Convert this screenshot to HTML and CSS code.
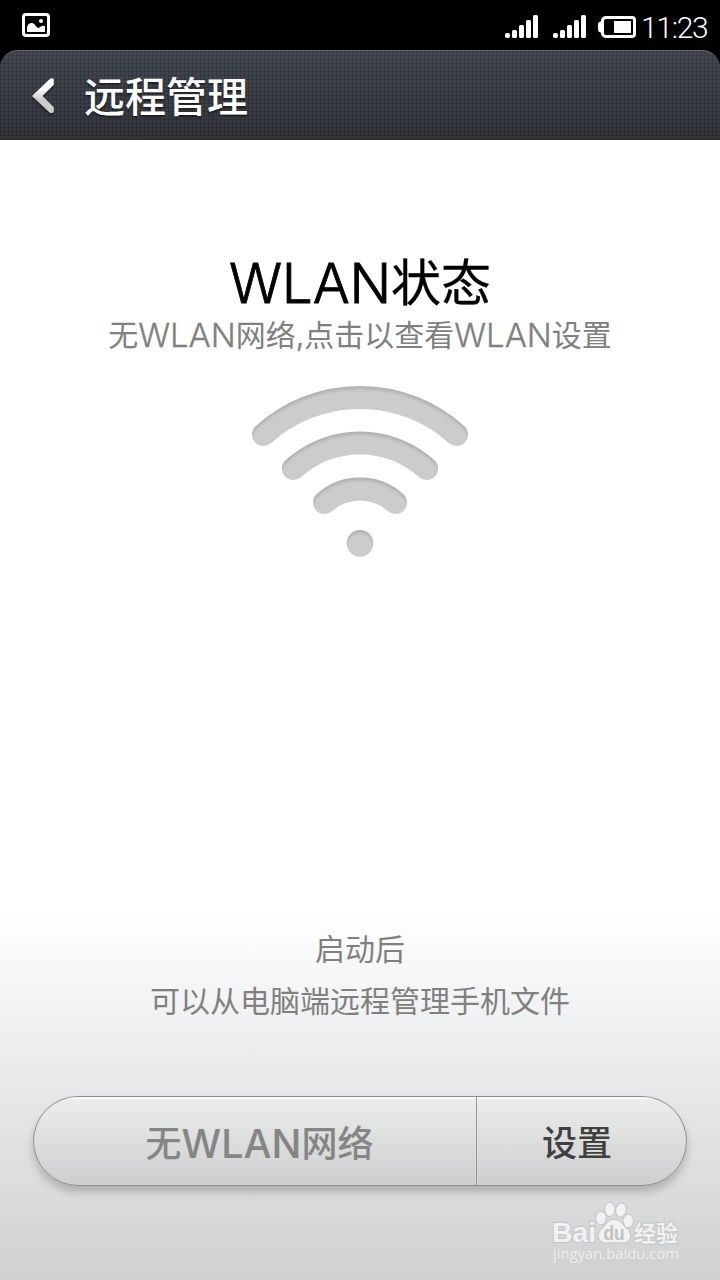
FILE: index.html
```html
<!DOCTYPE html>
<html lang="zh-CN">
<head>
<meta charset="utf-8">
<title>远程管理</title>
<link rel="stylesheet" href="styles.css">
</head>
<body>
<div class="screen">
  <div class="status">
    <svg class="status-photo" width="28" height="24" viewBox="0 0 28 24"><rect x="1.5" y="1.5" width="25" height="21" rx="2.500" fill="none" stroke="#fff" stroke-width="3"/><path d="M5 19v-5c1.500-4.500 5.500-5 8-2 2.300 2.800 3.500 4 5.500 1.800 1.500-1.300 3-1.300 4.500-.5V19z" fill="#fff"/><circle cx="19" cy="8" r="2" fill="#fff"/></svg>
    <div class="status-right">
      <svg class="signal" width="33" height="24" viewBox="0 0 33 24" fill="#fff"><rect y="18" width="5" height="5" rx="2"/><rect x="7" y="15" width="5" height="8" rx="1.500"/><rect x="14" y="10" width="5" height="13" rx="1.500"/><rect x="21" y="5" width="5" height="18" rx="1.500"/><rect x="28" width="5" height="23" rx="1.500"/></svg>
      <svg class="signal" width="33" height="24" viewBox="0 0 33 24" fill="#fff"><rect y="18" width="5" height="5" rx="2"/><rect x="7" y="15" width="5" height="8" rx="1.500"/><rect x="14" y="10" width="5" height="13" rx="1.500"/><rect x="21" y="5" width="5" height="18" rx="1.500"/><rect x="28" width="5" height="23" rx="1.500"/></svg>
      <svg class="battery" width="38" height="22" viewBox="0 0 38 22"><path d="M8 1.500H34Q36.500 1.500 36.500 4V18Q36.500 20.500 34 20.500H8Q5.500 20.500 4.500 18V4Q5.500 1.500 8 1.500Z" fill="none" stroke="#fff" stroke-width="3"/><path d="M4 5Q0 6 0 8v6q0 2 4 3z" fill="#fff"/><rect x="16" y="5" width="17" height="12" fill="#fff"/></svg>
      <span class="clock">11:23</span>
    </div>
  </div>
  <header class="header">
    <svg class="back" width="23" height="36" viewBox="0 0 23 36"><defs><linearGradient id="arrow" x2="0" y2="1"><stop offset=".3" stop-color="#fff"/><stop offset=".6" stop-color="#ccc"/></linearGradient></defs><path d="M17.500 1.200Q19.500-.6 21.800.8V6.800L10.500 18 21.800 29.200V34Q19.800 36 17.500 34.500L0 18Z" fill="url(#arrow)"/></svg>
    <h1 class="header-title">远程管理</h1>
  </header>
  <main class="main">
    <h2 class="title"><span class="latin">WLAN</span>状态</h2>
    <p class="subtitle">无<span class="latin">WLAN</span>网络<span class="comma">,</span>点击以查看<span class="latin">WLAN</span>设置</p>
    <svg class="wifi" width="220" height="176" viewBox="250 384 220 176">
      <defs><filter id="inset" filterUnits="userSpaceOnUse" x="240" y="376" width="240" height="190"><feOffset in="SourceAlpha" dy="3" result="o"/><feGaussianBlur in="o" stdDeviation="1.700" result="b"/><feComposite in="SourceAlpha" in2="b" operator="out" result="edge"/><feFlood flood-color="#777" flood-opacity=".4"/><feComposite in2="edge" operator="in" result="shade"/><feMerge><feMergeNode in="SourceGraphic"/><feMergeNode in="shade"/></feMerge></filter></defs>
      <g filter="url(#inset)"><g fill="none" stroke="#ccc" stroke-width="23" stroke-linecap="round"><path d="M263.500 434.500A144 144 0 0 1 456.500 434.500"/><path d="M293.500 468.500A99.500 99.500 0 0 1 426.500 468.500"/><path d="M324.500 502.500A53.500 53.500 0 0 1 395.500 502.500"/></g><circle cx="360" cy="543.300" r="13.300" fill="#ccc"/></g>
    </svg>
    <div class="hint"><p>启动后</p><p>可以从电脑端远程管理手机文件</p></div>
    <div class="actions">
      <button class="action action-network">无<span class="latin">WLAN</span>网络</button>
      <button class="action action-settings">设置</button>
    </div>
    <svg class="watermark" width="140" height="68" viewBox="546 1198 140 68">
      <g fill="#f1f2f2" stroke="#c5c6c8" stroke-width="2" paint-order="stroke">
        <text class="brand" x="552" y="1242" textLength="44" lengthAdjust="spacingAndGlyphs">Bai</text>
        <ellipse cx="601" cy="1218" rx="4.700" ry="6.300"/><ellipse cx="609.800" cy="1209.300" rx="4.700" ry="6.700"/><ellipse cx="621" cy="1210" rx="4.800" ry="6.500" transform="rotate(10 621 1210)"/><ellipse cx="628.300" cy="1221" rx="4.700" ry="6.300"/>
        <path d="M614 1220c-7 0-7 5-12 9-6 5-3 13.500 4 13.500 5 0 11-.5 16 0 8 .5 11-8 5-13.500-5-4-6-9-13-9z"/>
        <text class="brand-cn" x="634" y="1241" textLength="44" lengthAdjust="spacingAndGlyphs">经验</text>
        <text class="site" x="553" y="1259" textLength="126" lengthAdjust="spacingAndGlyphs">jingyan.baidu.com</text>
      </g>
      <text class="brand-du" x="603.500" y="1239.500" textLength="21" lengthAdjust="spacingAndGlyphs" fill="#c0c1c3">du</text>
    </svg>
  </main>
</div>
</body>
</html>
```
FILE: styles.css
```css
* { box-sizing: border-box; }
body { margin: 0; background: #000; font-family: Inter, "Noto Sans CJK SC", sans-serif; }
h1, h2, p { margin: 0; font-weight: 400; }
.screen { width: 720px; height: 1280px; display: flex; flex-direction: column; overflow: hidden; background: #000; font-family: "Noto Sans CJK SC", sans-serif; }
.status { height: 50px; display: flex; justify-content: space-between; padding: 0 12px 0 22px; }
.status-photo { margin-top: 13px; }
.status-right { display: flex; }
.signal { margin: 15px 15px 0 0; }
.signal + .battery { margin: 16px 5px 0 -3px; }
.clock { color: #fff; font: 300 30px/55px Roboto, sans-serif; width: 67px; white-space: nowrap; letter-spacing: -1.3px; }
.header { height: 90px; display: flex; padding-left: 32px; border-radius: 18px 18px 0 0; border-top: 1px solid #666970;
  background: repeating-linear-gradient(90deg, rgba(0,0,0,.15) 0 1px, transparent 1px 4px), repeating-linear-gradient(0deg, rgba(0,0,0,.15) 0 1px, transparent 1px 4px), linear-gradient(#444852, #33353a); }
.back { margin: 27px 29px 0 0; filter: drop-shadow(0 2px 1px rgba(0,0,0,.4)); }
.header-title { color: #fff; font-size: 41px; line-height: 87px; font-weight: 500; text-shadow: 0 2px 2px rgba(0,0,0,.45); }
.main { height: 1140px; display: flex; flex-direction: column; align-items: center; background: linear-gradient(#fff 0 770px, #e7e8ea 950px, #cfd0d2 1140px); }
.latin { font-family: Inter, sans-serif; }
.title { margin-top: 109px; height: 60px; line-height: 60px; font-size: 50px; color: #000; white-space: nowrap; -webkit-text-stroke: .3px #000; }
.title .latin { font-size: 55px; font-weight: 300; line-height: 1; vertical-align: -2px; letter-spacing: -.2px; -webkit-text-stroke: .8px #000; }
.subtitle { height: 44px; line-height: 44px; font-size: 30px; color: #808080; white-space: nowrap; margin-top: 2px; }
.subtitle .latin { font-size: 33px; font-weight: 300; line-height: 1; vertical-align: -1px; letter-spacing: -.1px; -webkit-text-stroke: .3px #808080; }
.comma { font-family: Inter, sans-serif; line-height: 1; }
.wifi { margin-top: 29px; flex: none; }
.hint { margin-top: 361px; height: 104px; font-size: 30px; line-height: 52px; text-align: center; color: #808080; }
.actions { margin-top: 71px; width: 654px; height: 90px; flex: none; display: flex; border: 1px solid #8b8c8d; border-radius: 45px; overflow: hidden; background: linear-gradient(#eceeed, #cdcecf); box-shadow: 0 6px 8px rgba(0,0,0,.2); }
.action { border: 0; padding: 0; background: none; box-shadow: inset 0 2px 1px rgba(255,255,255,.7); font-family: "Noto Sans CJK SC", sans-serif; font-size: 36px; font-weight: 500; line-height: 88px; white-space: nowrap; }
.action-network { width: 442px; color: #858585; padding-left: 9px; }
.action-network .latin { font-size: 39.500px; font-weight: 500; line-height: 1; vertical-align: -1px; }
.action-settings { flex: 1; border-left: 1px solid #969798; color: #404040; padding-right: 9px; font-size: 35px; }
.watermark { margin: 12px 0 0 512px; flex: none; }
.brand { font: 700 28px "Liberation Sans", sans-serif; }
.brand-cn { font: 700 22px "Noto Sans CJK SC", sans-serif; }
.brand-du { font: 700 20px "Liberation Sans", sans-serif; }
.site { font: 400 14px "Open Sans", sans-serif; stroke-width: .6px; }
```
